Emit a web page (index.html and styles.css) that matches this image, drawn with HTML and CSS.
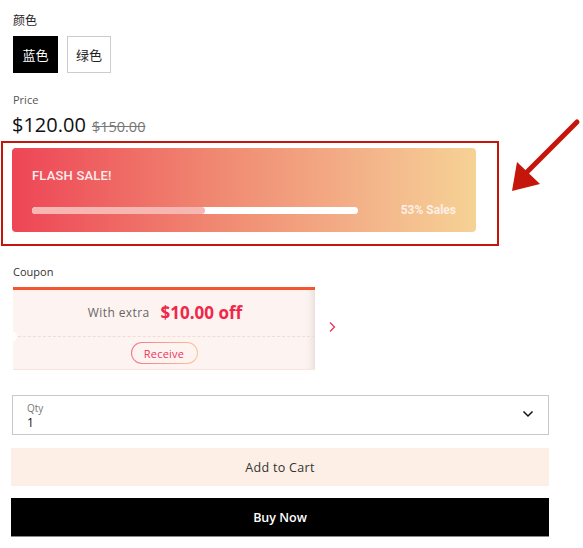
FILE: index.html
```html
<!DOCTYPE html>
<html>
<head>
<meta charset="utf-8">
<link rel="stylesheet" href="styles.css">
</head>
<body>
<div class="page">
  <div class="label cjk">颜色</div>
  <div class="swatches">
    <button class="swatch active cjk">蓝色</button>
    <button class="swatch cjk">绿色</button>
  </div>
  <div class="label price-label">Price</div>
  <div class="price-row">
    <span class="price">$120.00</span>
    <span class="old-price">$150.00</span>
  </div>
  <div class="flash-wrap">
    <div class="flash">
      <div class="flash-title">FLASH SALE!</div>
      <div class="flash-bottom">
        <div class="bar"><div class="bar-fill" style="width:53%"></div></div>
        <div class="flash-pct">53% Sales</div>
      </div>
    </div>
    <div class="annot-box"></div>
    <svg class="annot-arrow" width="80" height="80" viewBox="0 0 80 80">
      <line x1="67" y1="7" x2="14" y2="60" stroke="#c4160a" stroke-width="5" stroke-linecap="round"/>
      <polygon points="2,76 7,47 30,69" fill="#c4160a"/>
    </svg>
  </div>
  <div class="label coupon-label">Coupon</div>
  <div class="coupon-row">
    <div class="coupon">
      <div class="coupon-top">
        <span class="extra">With extra</span>
        <span class="amount">$10.00 off</span>
      </div>
      <div class="coupon-divider"><span class="notch"></span></div>
      <div class="coupon-bottom">
        <span class="receive">Receive</span>
      </div>
    </div>
    <svg class="coupon-next" width="10" height="12" viewBox="0 0 10 12">
      <path d="M3 1.5 L7.5 6 L3 10.5" fill="none" stroke="#f0325a" stroke-width="1.3"/>
    </svg>
  </div>
  <div class="qty">
    <div class="qty-text">
      <div class="qty-label">Qty</div>
      <div class="qty-value">1</div>
    </div>
    <svg class="qty-chevron" width="12" height="8" viewBox="0 0 12 8">
      <path d="M1.5 1.5 L6 6 L10.5 1.5" fill="none" stroke="#111" stroke-width="1.5"/>
    </svg>
  </div>
  <button class="btn cart">Add to Cart</button>
  <button class="btn buy">Buy Now</button>
</div>
</body>
</html>
```
FILE: styles.css
```css
html, body { margin: 0; padding: 0; background: #fff; }
body { font-family: "Open Sans", "Noto Sans CJK SC", sans-serif; color: #222; }
.cjk { font-family: "Noto Sans CJK SC", sans-serif; }
.page { padding: 12px 0 0 12px; width: 538px; }
.label { font-size: 12px; color: #222; line-height: 16px; padding-left: 1px; }
.swatches { display: flex; gap: 9px; margin-top: 8px; padding-left: 1px; }
.swatch {
  height: 37px; border: 1px solid #ccc; background: #fff; color: #222;
  font-size: 13px; padding: 0; width: 44px; margin: 0; cursor: pointer; white-space: nowrap;
}
.swatch.active { background: #000; color: #fff; border-color: #000; width: 45px; }
.price-label { margin-top: 19px; font-size: 11px; color: #555; }
.price-row { margin-top: 3px; display: flex; align-items: baseline; gap: 6px; height: 27px; }
.price { font-size: 20px; color: #111; }
.old-price { font-size: 14.5px; color: #777; text-decoration: line-through; }
.flash-wrap { position: relative; margin-top: 10px; height: 96px; }
.flash {
  width: 464px; height: 84px; border-radius: 4px;
  background: linear-gradient(90deg, #ee4556 0%, #f08a72 45%, #f4b88c 80%, #f6d295 100%);
  box-sizing: border-box; padding: 20px 20px 0 20px; color: #fff;
  font-family: Roboto, "Liberation Sans", sans-serif;
}
.flash-title { font-size: 13px; font-weight: 500; line-height: 15px; letter-spacing: 0.2px; color: #fdecea; }
.flash-bottom { display: flex; align-items: center; margin-top: 20px; }
.bar { width: 326px; height: 7px; background: #fff; border-radius: 4px; overflow: hidden; }
.bar-fill { height: 100%; background: #f6b6b2; border-radius: 4px; }
.flash-pct { margin-left: auto; font-size: 12px; font-weight: 700; color: #fdf0e6; }
.annot-box {
  position: absolute; left: -11px; top: -7px; width: 498px; height: 105px;
  border: 2.5px solid #c4160a; box-sizing: border-box;
}
.annot-arrow { position: absolute; left: 498px; top: -33px; }
.coupon-label { margin-top: 20px; font-size: 11px; color: #333; }
.coupon-row { display: flex; align-items: center; margin-top: 7px; padding-left: 1px; }
.coupon {
  width: 302px; height: 83px; box-sizing: border-box; background: #fdf4f1;
  border-top: 3px solid #f4542f; border-bottom: 1px solid #fae5da;
  box-shadow: inset -8px 0 7px -5px rgba(0,0,0,0.09);
  font-family: "Open Sans", sans-serif;
}
.coupon-top { display: flex; align-items: center; justify-content: center; gap: 11px; height: 44px; padding-left: 2px; }
.extra { font-size: 12px; color: #666; letter-spacing: 0.4px; }
.amount { font-size: 17px; font-weight: 700; color: #f0274b; }
.coupon-divider { position: relative; height: 0; border-top: 1px dashed #f1dcd3; margin: 2px 0 0 0; }
.notch { position: absolute; left: -4px; top: -5px; width: 8px; height: 9px; border-radius: 50%; background: #fff; }
.coupon-bottom { display: flex; justify-content: center; padding-top: 5px; }
.receive {
  display: inline-flex; align-items: center; justify-content: center;
  width: 67px; height: 22px; box-sizing: border-box; border-radius: 11px;
  border: 1px solid transparent;
  background: linear-gradient(#fdf4f1, #fdf4f1) padding-box,
              linear-gradient(90deg, #f5738a, #f8c89c) border-box;
  font-size: 11px; color: #f0325a; letter-spacing: 0.2px;
}
.coupon-next { margin-left: 12px; margin-top: -3px; }
.qty {
  margin-top: 25px; height: 40px; box-sizing: border-box; border: 1px solid #c9c9c9;
  display: flex; align-items: center; padding: 0 14px 0 14px; width: 537px;
}
.qty-text { flex: 1; margin-top: 1px; }
.qty-label { font-size: 10px; color: #777; line-height: 13px; }
.qty-value { font-size: 12px; color: #111; line-height: 15px; }
.qty-chevron { margin-top: -2px; }
.btn {
  display: block; width: 538px; height: 38px; border: none; margin: 0 0 0 -1px;
  font-family: "Open Sans", sans-serif; font-size: 12.5px; cursor: pointer;
}
.cart { margin-top: 13px; background: #fdefe6; color: #333; letter-spacing: 0.3px; }
.buy { margin-top: 12px; height: 39px; background: #000; color: #fff; font-weight: 600; border-bottom: 1px solid #888; }
```
